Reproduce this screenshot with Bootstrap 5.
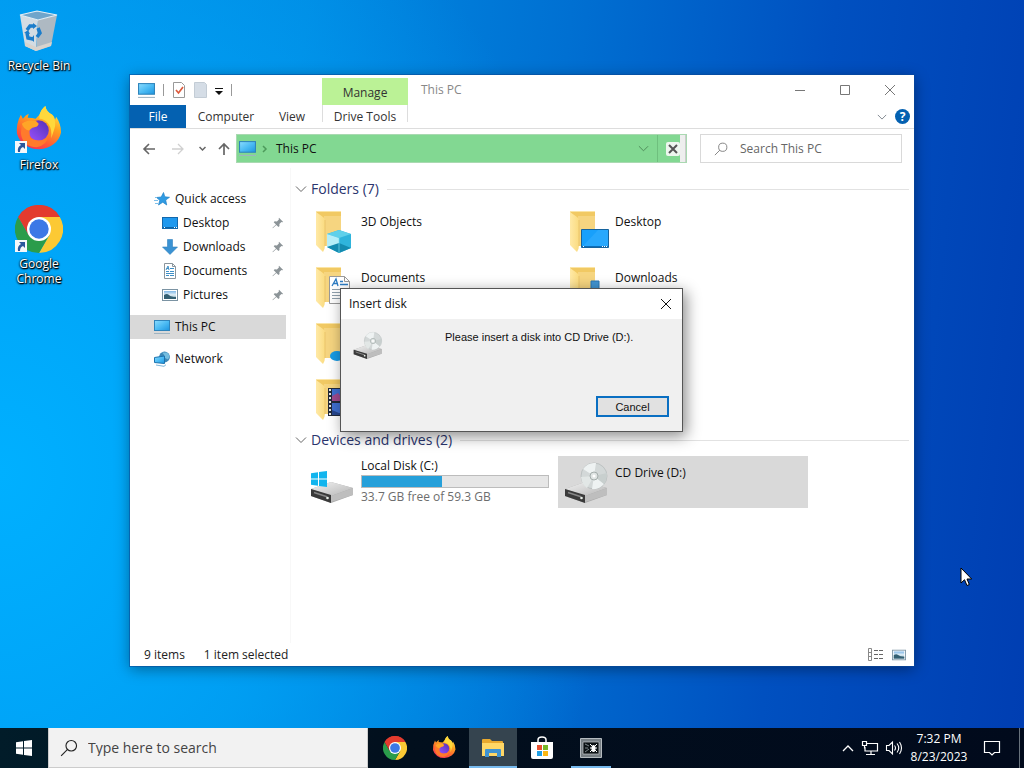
<!DOCTYPE html>
<html lang="en">

<head>
  <meta charset="utf-8">
  <meta name="viewport" content="width=device-width, initial-scale=1">
  <title>This PC</title>
  <link href="https://cdn.jsdelivr.net/npm/bootstrap@5.3.2/dist/css/bootstrap.min.css" rel="stylesheet">
  <script src="https://cdn.jsdelivr.net/npm/bootstrap@5.3.2/dist/js/bootstrap.bundle.min.js"></script>
  <style>
    body {
      font-family: "Open Sans", "Noto Sans", sans-serif;
      font-size: 12px;
      line-height: 16px;
      color: #111;
    }

    svg {
      display: block;
      flex: none;
    }

    button {
      border: 0;
      padding: 0;
      background: none;
      color: inherit;
    }

    a {
      color: inherit;
      text-decoration: none;
    }

    .desktop {
      background:
        radial-gradient(ellipse 620px 700px at 0 65%, #00b0ff 0, #00aafccc 35%, #00a0f800 100%),
        linear-gradient(96deg, #0094ea 0, #008ae2 28%, #0070d2 52%, #0050c0 76%, #003eb2 100%);
    }

    /* desktop shortcuts */
    .shortcuts {
      width: 78px;
      padding-top: 7px;
      gap: 17px;
    }

    .shortcut {
      color: #fff;
      line-height: 15px;
      min-height: 82px;
      text-align: center;
      text-shadow: 1px 1px 1px #000, 0 1px 2px #000, 0 0 2px #000;
    }

    .shortcut svg {
      margin: 0 auto 2px;
    }

    /* explorer window */
    .explorer {
      top: 75px;
      right: 110px;
      bottom: 62px;
      left: 130px;
      box-shadow: 0 0 0 1px #0a4a9a88, 0 3px 14px #0006;
    }

    .titlebar {
      height: 30px;
      padding-right: 2px;
    }

    .quick-tools {
      width: 192px;
      padding-left: 8px;
    }

    .sep {
      width: 1px;
      height: 12px;
      background: #999;
    }

    .manage-tab {
      width: 86px;
      margin-top: 3px;
      padding-top: 2px;
      background: #bbf296;
      color: #333;
    }

    .window-name {
      margin-left: 13px;
      color: #888;
    }

    .caption-btn {
      width: 45px;
      color: #777;
    }

    .ribbon {
      height: 24px;
      border-bottom: 1px solid #ddd;
      color: #333;
    }

    .ribbon a {
      display: flex;
      align-items: center;
      justify-content: center;
      padding-top: 1px;
    }

    .tab-file {
      width: 56px;
      background: #0461b1;
      color: #fff;
    }

    .tab-computer {
      width: 80px;
    }

    .tab-view {
      width: 52px;
      margin-right: 4px;
    }

    .ribbon .tab-drive {
      width: 86px;
      border: solid #ddd;
      border-width: 0 1px;
      margin-bottom: 6px;
      padding-top: 7px;
    }

    .help-btn {
      width: 15px;
      height: 15px;
      background: #0461b1;
    }

    .address-row {
      height: 39px;
      padding: 5px 12px 5px 10px;
    }

    .history {
      width: 96px;
      padding-left: 1px;
      gap: 14px;
    }

    .history-up {
      margin-left: -2px;
    }

    .address {
      height: 29px;
      margin-right: 13px;
      padding-left: 2px;
      background: #82d892;
      border: 1px solid #a9d9b1;
    }

    .address-end {
      width: 6px;
      background: #eee;
      border-right: 1px solid #ccc;
    }

    .address-drop {
      color: #4b8756;
    }

    .stop-btn {
      width: 23px;
      border-left: 1px solid #6fbf7e;
      padding-left: 8px;
    }

    .find {
      width: 202px;
      height: 29px;
      border: 1px solid #d9d9d9;
      padding-left: 13px;
      gap: 12px;
      color: #777;
    }

    .find input,
    .task-search input {
      border: 0;
      outline: 0;
      background: none;
      min-width: 0;
      padding: 0;
    }

    .find input::placeholder {
      color: #666;
      opacity: 1;
    }

    .tree {
      width: 156px;
      padding-top: 19px;
      margin-right: 4px;
      flex: none;
    }

    .tree a {
      display: flex;
      align-items: center;
      height: 24px;
      gap: 5px;
      padding: 0 2px 0 24px;
    }

    .tree a.sub {
      padding-left: 32px;
    }

    .tree a.picked,
    .tile.picked {
      background: #d9d9d9;
    }

    .files {
      border-left: 1px solid #f8f8f8;
      padding: 7px 5px 0 4px;
    }

    .group-head {
      height: 30px;
      padding-bottom: 2px;
      gap: 4px;
      font-size: 14px;
      line-height: 20px;
      color: #2b356e;
      font-weight: 400;
    }

    .group-head::after {
      content: "";
      flex: 1;
      height: 1px;
      background: #e2e2e2;
      margin-left: 4px;
    }

    .group-head svg {
      color: #666;
    }

    .tiles {
      gap: 4px;
      padding-left: 9px;
      margin-bottom: 1px;
    }

    .tile {
      width: 250px;
      height: 52px;
      padding: 2px 5px 2px 3px;
      gap: 6px;
    }

    .tile-text {
      padding-top: 7px;
    }

    .tile-text.full {
      padding-top: 0;
    }

    .progress.usage {
      height: 13px;
      border: 1px solid #bcbcbc;
      background: #e6e6e6;
      margin: 1px 0;
    }

    .usage .progress-bar {
      background: #26a0da;
    }

    .free {
      color: #6d6d6d;
    }

    .status {
      height: 23px;
      padding: 0 8px 0 14px;
      color: #222;
    }

    .item-count {
      margin-right: 19px;
    }

    /* insert disk dialog */
    .disk-dialog {
      top: 288px;
      left: 340px;
      width: 343px;
      background: #f0f0f0;
      border: 1px solid #555;
      box-shadow: 3px 4px 14px #0007;
    }

    .dialog-title {
      height: 30px;
      padding-left: 8px;
      background: #fff;
    }

    .dialog-title button {
      width: 32px;
      height: 30px;
    }

    .dialog-main {
      min-height: 77px;
      padding: 10px 10px 0;
      gap: 62px;
      font-family: "Liberation Sans", sans-serif;
      font-size: 11px;
    }

    .cancel-btn {
      width: 73px;
      height: 21px;
      margin: 0 13px 14px;
      border: 2px solid #0a6fc2;
      background: #e1e1e1;
      font-family: "Liberation Sans", sans-serif;
      font-size: 11px;
      line-height: 16px;
    }

    /* taskbar */
    .taskbar {
      height: 40px;
      background: linear-gradient(90deg, #011c29, #020f1d 40%, #010a1c);
      color: #fff;
    }

    .start {
      width: 48px;
    }

    .task-search {
      width: 320px;
      background: #f2f2f2;
      border: 1px solid #ccc;
      border-top: 0;
      padding-left: 11px;
      gap: 10px;
      margin-right: 3px;
      font-size: 14px;
      color: #222;
    }

    .task-search input::placeholder {
      color: #444;
      opacity: 1;
    }

    .task-btn {
      width: 48px;
      margin-right: 1px;
      display: flex;
      align-items: center;
      justify-content: center;
    }

    .task-btn.current {
      background: #35444f;
      border-bottom: 2px solid #76b9ed;
      padding-top: 2px;
    }

    .task-btn.opened {
      width: 40px;
      margin-left: 4px;
      border-bottom: 2px solid #76b9ed;
      padding-top: 2px;
    }

    .tray {
      gap: 6px;
    }

    .clock {
      width: 60px;
      line-height: 18px;
      text-align: center;
    }

    .peek {
      width: 5px;
      border-left: 1px solid #68727c;
    }

    .pointer {
      left: 960px;
      top: 567px;
    }
  </style>
</head>

<body class="vh-100 overflow-hidden d-flex flex-column">

  <!-- shared icons -->
  <svg width="0" height="0" class="position-absolute" aria-hidden="true">
    <defs>
      <linearGradient id="screen" x1="0" y1="0" x2="1" y2="1">
        <stop offset="0" stop-color="#8bdcff" />
        <stop offset=".5" stop-color="#4dbcf4" />
        <stop offset="1" stop-color="#1c95e0" />
      </linearGradient>
      <linearGradient id="gold" x1="0" y1="0" x2="1" y2="0">
        <stop offset="0" stop-color="#ffe9a6" />
        <stop offset="1" stop-color="#fadb80" />
      </linearGradient>
      <linearGradient id="fox" x1=".8" y1="0" x2=".3" y2="1">
        <stop offset="0" stop-color="#fff14f" />
        <stop offset=".4" stop-color="#ffa21f" />
        <stop offset=".75" stop-color="#ff5a35" />
        <stop offset="1" stop-color="#f32e5c" />
      </linearGradient>
      <linearGradient id="globe" x1="0" y1="1" x2="1" y2="0">
        <stop offset="0" stop-color="#9a52ff" />
        <stop offset="1" stop-color="#5330b5" />
      </linearGradient>
      <linearGradient id="metal" x1="0" y1="0" x2="1" y2="1">
        <stop offset="0" stop-color="#f2f2f2" />
        <stop offset="1" stop-color="#b5b5b5" />
      </linearGradient>
      <linearGradient id="photo" x1="0" y1="0" x2="0" y2="1">
        <stop offset="0" stop-color="#7eb6e6" />
        <stop offset=".5" stop-color="#e5f1f7" />
        <stop offset="1" stop-color="#4d7f96" />
      </linearGradient>
    </defs>

    <symbol id="i-pc" viewBox="0 0 16 16">
      <rect x=".5" y="1.500" width="15" height="10" fill="url(#screen)" stroke="#2f84bb" />
      <path d="M0 14.500h16" stroke="#9fb4c2" />
    </symbol>
    <symbol id="i-desk" viewBox="0 0 16 16">
      <rect x=".5" y="2.500" width="15" height="11" fill="#1e98ee" stroke="#1268ac" />
      <path d="M1 12.500h14" stroke="#0b63a5" />
      <path d="M2 12.500h1m9 0h1m1 0h1" stroke="#fff" />
    </symbol>
    <symbol id="i-down" viewBox="0 0 16 16">
      <path d="M5.500.5h5v7.500h5L8 15.500.5 8h5z" fill="#3a92d3" stroke="#2f7fbd" stroke-width=".6" />
    </symbol>
    <symbol id="i-doc" viewBox="0 0 16 16">
      <path d="M2.500.5h8l3 3v12h-11z" fill="#fff" stroke="#8a959c" />
      <path d="M10.500.5v3h3" fill="none" stroke="#8a959c" />
      <path d="M4 7l2-4 1 4M4.500 5.500h2.500M8 5.500h4M4 8.500h3m1 0h4M4 10.500h8M4 12.500h3m1 0h4" fill="none" stroke="#3e8fc6" />
    </symbol>
    <symbol id="i-pic" viewBox="0 0 16 16">
      <rect x=".5" y="2.500" width="15" height="11" fill="#fff" stroke="#7b93a3" />
      <rect x="2" y="4" width="12" height="8" fill="url(#photo)" />
      <path d="M2 8q3-2 5 0t7 2v2H2z" fill="#335f72" />
    </symbol>
    <symbol id="i-star" viewBox="0 0 16 16">
      <path d="M9.500 1.500l1.300 4.300 4.700.5-3.800 2.700 1 5-3.900-2.800L4.500 14l1.300-4.700L2.500 6.500l4.700-.5z" fill="#2f9be3" stroke="#2383c7" stroke-width=".7" />
      <path d="M0 9.500h4M1 12.500h3M1 6.500h2" stroke="#7fc0ea" />
    </symbol>
    <symbol id="i-net" viewBox="0 0 16 16">
      <circle cx="10.500" cy="6" r="5.400" fill="#3c87b6" />
      <path d="M8 1.500q3 2 2 5l4 2q3-4-1-7z" fill="#74bddf" />
      <path d="M.5 6.500L10.500 5v7.500l-10-1z" fill="url(#screen)" stroke="#1b72ae" />
      <path d="M2 14l8 1.300 2-1.600" fill="none" stroke="#7fb6d8" />
    </symbol>
    <symbol id="i-pin" viewBox="0 0 12 12">
      <path d="M7 .8L11.200 5l-1 .3-.8-.2-2 2 .1 2-1 1L4.300 7.900.8 11.300l-.3-.5L4 7.500 1.700 5.300l1-1 2.200.2 2-2-.2-.9z" fill="#8c9498" />
    </symbol>
    <symbol id="i-chev" viewBox="0 0 12 12">
      <path d="M1 3.500l5 5 5-5" fill="none" stroke="currentColor" />
    </symbol>
    <symbol id="i-close" viewBox="0 0 12 12">
      <path d="M1 1l10 10M11 1L1 11" fill="none" stroke="currentColor" />
    </symbol>
    <symbol id="i-lens" viewBox="0 0 16 16">
      <circle cx="10" cy="6" r="4.700" fill="none" stroke="currentColor" />
      <path d="M6.700 9.300L1 15" stroke="currentColor" />
    </symbol>
    <symbol id="i-folder" viewBox="0 0 48 48">
      <path d="M9 4h25v35H15z" fill="#f1c963" />
      <path d="M17 9h17v29l-14 1q-3 0-3-2z" fill="#f6d580" />
      <path d="M9 5l7 5q2 1 2 4v24q0 4-2 7l-7-7z" fill="url(#gold)" />
      <path d="M9 4.500h25" stroke="#fbe5a5" />
      <path d="M18 13v26" stroke="#e2b95a" stroke-width=".6" />
    </symbol>
    <symbol id="i-drive" viewBox="0 0 48 26">
      <path d="M4 12L24 5l22 6v7L24 26 4 19z" fill="#aaa" />
      <path d="M4 12L24 5l22 6-22 8z" fill="url(#metal)" />
      <path d="M24 19l22-8v7l-22 7z" fill="#bebebe" />
      <path d="M4 12l20 6v8L4 19z" fill="#3a3a3a" />
      <path d="M7 15.500l13 4.200" stroke="#868686" stroke-width="1.500" />
      <circle cx="20.500" cy="21" r="1.300" fill="#e9efe9" />
    </symbol>
    <symbol id="i-cd" viewBox="0 0 48 48">
      <use href="#i-drive" y="19" width="48" height="26" />
      <circle cx="33" cy="18" r="13" fill="#d3d8d8" stroke="#b1b7b7" stroke-width=".7" />
      <path d="M33 18L22 11q5-7 13-6zM33 18l10 8q-5 6-12 5z" fill="#eef2f2" />
      <path d="M33 18l13-3q0 7-3 11z" fill="#c8cfce" />
      <path d="M33 18l-13 1q1 8 6 11z" fill="#e2e7e6" />
      <circle cx="33" cy="18" r="4" fill="#dfe4e3" stroke="#a5adac" />
      <circle cx="33" cy="18" r="1.500" fill="#fff" />
    </symbol>
    <symbol id="i-chrome" viewBox="0 0 48 48">
      <path d="M24 24L3.200 12A24 24 0 0 1 44.800 12z" fill="#e33b2e" />
      <path d="M24 12h20.800A24 24 0 0 1 24 48l10.400-18z" fill="#fcc934" />
      <path d="M13.600 30L3.200 12A24 24 0 0 0 24 48l10.400-18z" fill="#2b9c4b" />
      <path d="M3.200 12A24 24 0 0 1 44.800 12H24L13.600 30z" fill="#e33b2e" />
      <circle cx="24" cy="24" r="12" fill="#fff" />
      <circle cx="24" cy="24" r="9.700" fill="#3c78e6" />
    </symbol>
    <symbol id="i-firefox" viewBox="0 0 48 48">
      <path d="M25 9Q27 3 31 0q1 6 7 9 2 1 3 5l1-3q5 7 5 16a23 21 0 0 1-45 1Q1 18 6 9l2 4q3-4 6-5l-1 4q5 0 8 1z" fill="url(#fox)" />
      <circle cx="24" cy="25" r="10.500" fill="url(#globe)" />
      <path d="M7 18q6-5 14-3l3 3q0 3-6 4-4 2-3 6-1 6 7 7 8 1 12-5-1 10-12 12Q8 42 6 28z" fill="#ff7a2c" />
      <path d="M25 9Q27 3 31 0q1 6 7 9 5 7 2 15l-3 9q1-10-3-15-4-5-9-5z" fill="#ffd83b" />
      <path d="M7 18q6-5 14-3l3 3q0 3-6 4l-4 3q-5-1-7-7z" fill="#ffa527" />
    </symbol>
    <symbol id="i-link" viewBox="0 0 12 12">
      <path d="M0 0h12v12H0z" fill="#f5f7fa" />
      <path d="M4 2h6v6L8 6q-3 1-3 5H3q-1-5 3-7z" fill="#2a579c" />
    </symbol>
    <symbol id="i-win" viewBox="0 0 16 16">
      <path d="M0 2.300l7-1v6.200H0zM8 1.100L16 0v7.500H8zM0 8.500h7v6.200l-7-1zM8 8.500h8V16l-8-1.100z" fill="currentColor" />
    </symbol>
  </svg>

  <main class="desktop position-relative flex-grow-1">

    <nav class="shortcuts d-flex flex-column" aria-label="Desktop shortcuts">
      <a href="#" class="shortcut">
        <svg width="48" height="49" viewBox="0 0 48 49">
          <path d="M5 8l18 5-2 31-11-5z" fill="#d3dce3" />
          <path d="M23 13l19-5-6 31-15 5z" fill="#aeb9c2" />
          <path d="M5 8l17-4 20 4-19 5z" fill="#6fa5cb" stroke="#e6eff5" stroke-width="1.200" />
          <path d="M10 35l11 5 16-5-1 4-15 5-11-5z" fill="#d8d3cd" />
          <g fill="none" stroke="#1b7dcb" stroke-width="3.500">
            <path d="M12 23l3-4h4M23 21l2 5-3 4M18 32l-5-1-1-5" />
          </g>
          <path d="M18 16l4 3-4 3zM19 28v7l-3-3zM9 26l4-3 2 4z" fill="#1b7dcb" />
        </svg>
        Recycle Bin
      </a>
      <a href="#" class="shortcut">
        <svg width="48" height="49" viewBox="0 0 48 49">
          <use href="#i-firefox" width="47" height="47" />
          <use href="#i-link" y="35" width="12" height="12" />
        </svg>
        Firefox
      </a>
      <a href="#" class="shortcut">
        <svg width="48" height="49" viewBox="0 0 48 49">
          <use href="#i-chrome" width="48" height="48" />
          <use href="#i-link" y="35" width="12" height="12" />
        </svg>
        Google<br>Chrome
      </a>
    </nav>

    <section class="explorer position-absolute bg-white d-flex flex-column" aria-label="This PC">
      <header class="titlebar d-flex">
        <div class="quick-tools d-flex align-items-center">
          <svg width="17" height="17" class="me-2"><use href="#i-pc" /></svg>
          <span class="sep me-2"></span>
          <button type="button" class="me-2" aria-label="Properties">
            <svg width="14" height="16" viewBox="1 0 14 16">
              <path d="M2.500.5h8l3 3v12h-11z" fill="#fff" stroke="#999" />
              <path d="M5 8l2.500 3L12 5" fill="none" stroke="#dc5a3c" stroke-width="1.700" />
            </svg>
          </button>
          <button type="button" class="me-2" aria-label="New folder">
            <svg width="13" height="16" viewBox="0 0 13 16">
              <path d="M.5.500h10l2 2v13H.5z" fill="#d5dde6" stroke="#c3ccd5" />
            </svg>
          </button>
          <button type="button" class="me-2" aria-label="Customize toolbar">
            <svg width="8" height="9" viewBox="0 0 8 9">
              <path d="M0 2h8v1H0zM0 5h8L4 9z" fill="#111" />
            </svg>
          </button>
          <span class="sep"></span>
        </div>
        <div class="manage-tab d-flex align-items-center justify-content-center">Manage</div>
        <div class="window-name align-self-center">This PC</div>
        <div class="ms-auto d-flex">
          <button type="button" class="caption-btn" aria-label="Minimize">
            <svg class="mx-auto" width="12" height="12" viewBox="0 0 12 12"><path d="M1 6.500h10" stroke="currentColor" /></svg>
          </button>
          <button type="button" class="caption-btn" aria-label="Maximize">
            <svg class="mx-auto" width="12" height="12" viewBox="0 0 12 12"><path d="M1.500 1.500h9v9h-9z" fill="none" stroke="currentColor" /></svg>
          </button>
          <button type="button" class="caption-btn" aria-label="Close">
            <svg class="mx-auto" width="12" height="12"><use href="#i-close" /></svg>
          </button>
        </div>
      </header>

      <nav class="ribbon d-flex" aria-label="Ribbon">
        <a href="#" class="tab-file">File</a>
        <a href="#" class="tab-computer">Computer</a>
        <a href="#" class="tab-view">View</a>
        <a href="#" class="tab-drive">Drive Tools</a>
        <div class="ms-auto d-flex align-items-center pe-1 gap-2">
          <button type="button" aria-label="Expand ribbon">
            <svg width="10" height="10" class="text-secondary"><use href="#i-chev" /></svg>
          </button>
          <button type="button" aria-label="Help" class="help-btn d-flex align-items-center justify-content-center rounded-circle text-white fw-bold">?</button>
        </div>
      </nav>

      <div class="address-row d-flex align-items-center">
        <div class="history d-flex align-items-center">
          <button type="button" aria-label="Back">
            <svg width="16" height="14" viewBox="0 0 16 14"><path d="M14 7H3M8 2L3 7l5 5" fill="none" stroke="#666" stroke-width="1.600" /></svg>
          </button>
          <button type="button" aria-label="Forward">
            <svg width="14" height="14" viewBox="0 0 14 14"><path d="M1 7h11M7 2l5 5-5 5" fill="none" stroke="#d0d0d0" stroke-width="1.300" /></svg>
          </button>
          <button type="button" aria-label="Recent locations">
            <svg width="7" height="7" viewBox="0 0 7 7"><path d="M.5 2l3 3 3-3" fill="none" stroke="#666" stroke-width="1.500" /></svg>
          </button>
          <button type="button" class="history-up" aria-label="Up">
            <svg width="12" height="14" viewBox="2 0 12 14"><path d="M8 13V2M3 7l5-5 5 5" fill="none" stroke="#666" stroke-width="1.700" /></svg>
          </button>
        </div>
        <div class="address d-flex flex-grow-1">
          <div class="d-flex align-items-center flex-grow-1">
            <svg width="17" height="17" class="me-1"><use href="#i-pc" /></svg>
            <svg width="8" height="8" viewBox="0 0 8 8" class="me-2"><path d="M3 1l3 3-3 3" fill="none" stroke="#4d9a5b" stroke-width="1.500" /></svg>
            <a href="#">This PC</a>
            <button type="button" class="address-drop ms-auto me-2" aria-label="Previous locations">
              <svg width="11" height="11"><use href="#i-chev" /></svg>
            </button>
          </div>
          <button type="button" class="stop-btn" aria-label="Stop">
            <svg width="14" height="14" viewBox="0 0 14 14">
              <rect width="14" height="14" rx="2" fill="#eef6ef" />
              <path d="M3 3l8 8M11 3l-8 8" stroke="#555" stroke-width="2" />
            </svg>
          </button>
          <span class="address-end"></span>
        </div>
        <label class="find d-flex align-items-center">
          <svg width="14" height="14"><use href="#i-lens" /></svg>
          <input type="search" placeholder="Search This PC" aria-label="Search This PC">
        </label>
      </div>

      <div class="d-flex flex-grow-1 overflow-hidden">
        <nav class="tree" aria-label="Navigation pane">
          <a href="#"><svg width="16" height="16"><use href="#i-star" /></svg>Quick access</a>
          <a href="#" class="sub"><svg width="16" height="16"><use href="#i-desk" /></svg>Desktop<svg class="ms-auto" width="12" height="12"><use href="#i-pin" /></svg></a>
          <a href="#" class="sub"><svg width="16" height="16"><use href="#i-down" /></svg>Downloads<svg class="ms-auto" width="12" height="12"><use href="#i-pin" /></svg></a>
          <a href="#" class="sub"><svg width="16" height="16"><use href="#i-doc" /></svg>Documents<svg class="ms-auto" width="12" height="12"><use href="#i-pin" /></svg></a>
          <a href="#" class="sub"><svg width="16" height="16"><use href="#i-pic" /></svg>Pictures<svg class="ms-auto" width="12" height="12"><use href="#i-pin" /></svg></a>
          <a href="#" class="picked mt-2"><svg width="16" height="16"><use href="#i-pc" /></svg>This PC</a>
          <a href="#" class="mt-2"><svg width="16" height="16"><use href="#i-net" /></svg>Network</a>
        </nav>

        <div class="files flex-grow-1">
          <h2 class="group-head d-flex align-items-center m-0"><svg width="12" height="12"><use href="#i-chev" /></svg>Folders (7)</h2>
          <div class="tiles d-flex flex-wrap">
            <a href="#" class="tile d-flex">
              <svg width="48" height="48" viewBox="0 0 48 48">
                <use href="#i-folder" />
                <path d="M20 27l12-4 12 4v14l-12 5-12-6z" fill="#2fb4dc" />
                <path d="M20 27l12-4 12 4-12 4z" fill="#5fd0ea" />
                <path d="M20 27l12 4v8l-12 1z" fill="#b5eef8" />
                <path d="M20 40l12-4 12 5-12 5z" fill="#148bb0" />
                <path d="M32 31v15" stroke="#7fdcf0" stroke-width=".7" />
              </svg>
              <div class="tile-text">3D Objects</div>
            </a>
            <a href="#" class="tile d-flex">
              <svg width="48" height="48" viewBox="0 0 48 48">
                <use href="#i-folder" />
                <path d="M20.500 22.500h27v18h-27z" fill="#18a0fb" stroke="#15639e" />
                <path d="M21 40l16-17h10v17z" fill="#38b0ff" opacity=".5" />
                <path d="M21 39.500h26" stroke="#0c6db8" />
                <path d="M22 39.500h2m17 0h5" stroke="#fff" stroke-dasharray="1" />
              </svg>
              <div class="tile-text">Desktop</div>
            </a>
            <a href="#" class="tile d-flex">
              <svg width="48" height="48" viewBox="0 0 48 48">
                <use href="#i-folder" />
                <path d="M22.500 13.500h15l5 5v22h-20z" fill="#fff" stroke="#999" />
                <path d="M37.500 13.500v5h5" fill="none" stroke="#999" />
                <path d="M25 23l4-7 2 7M26 20.500h5M33 18.500h3M33 21.500h8" fill="none" stroke="#2d7cc2" stroke-width="1.300" />
                <path d="M25 26.500h15M25 29.500h15M25 32.500h15M25 35.500h15" stroke="#8fa0ad" />
              </svg>
              <div class="tile-text">Documents</div>
            </a>
            <a href="#" class="tile d-flex">
              <svg width="48" height="48" viewBox="0 0 48 48">
                <use href="#i-folder" />
                <path d="M30 18h8v12h6L34 42 24 30h6z" fill="#4295d2" stroke="#2b76b2" />
              </svg>
              <div class="tile-text">Downloads</div>
            </a>
            <a href="#" class="tile d-flex" aria-label="Music">
              <svg width="48" height="48" viewBox="0 0 48 48">
                <use href="#i-folder" />
                <ellipse cx="30" cy="37" rx="7" ry="5" fill="#169be5" />
                <path d="M36 37V18l8 5" fill="none" stroke="#169be5" stroke-width="2" />
              </svg>
            </a>
            <a href="#" class="tile d-flex" aria-label="Pictures">
              <svg width="48" height="48" viewBox="0 0 48 48">
                <use href="#i-folder" />
                <use href="#i-pic" x="19" y="19" width="28" height="24" />
              </svg>
            </a>
            <a href="#" class="tile d-flex" aria-label="Videos">
              <svg width="48" height="48" viewBox="0 0 48 48">
                <use href="#i-folder" />
                <path d="M21 13h24v28H21z" fill="#222a3a" />
                <path d="M25 14h16v12H25zM25 28h16v12H25z" fill="#3f6fd0" />
                <path d="M25 21l6-3 4 5 6-2v5H25z" fill="#a04a8e" />
                <path d="M25 35l7 3h9v2H25z" fill="#27468e" />
                <path d="M23 14v26" stroke="#e6e6e6" stroke-width="2" stroke-dasharray="2" />
              </svg>
            </a>
          </div>

          <h2 class="group-head d-flex align-items-center m-0"><svg width="12" height="12"><use href="#i-chev" /></svg>Devices and drives (2)</h2>
          <div class="tiles d-flex flex-wrap">
            <a href="#" class="tile d-flex">
              <svg width="48" height="48" viewBox="0 0 48 48">
                <use href="#i-drive" y="19" width="48" height="26" />
                <use href="#i-win" x="4" y="13" width="16" height="16" color="#12b5ee" />
              </svg>
              <div class="tile-text full flex-grow-1">
                <div>Local Disk (C:)</div>
                <div class="progress usage rounded-0" role="progressbar" aria-label="Space used" aria-valuenow="43" aria-valuemin="0" aria-valuemax="100">
                  <div class="progress-bar" style="width: 43%"></div>
                </div>
                <div class="free">33.7 GB free of 59.3 GB</div>
              </div>
            </a>
            <a href="#" class="tile picked d-flex">
              <svg width="48" height="48"><use href="#i-cd" /></svg>
              <div class="tile-text">CD Drive (D:)</div>
            </a>
          </div>
        </div>
      </div>

      <footer class="status d-flex align-items-center">
        <span class="item-count">9 items</span>
        <span>1 item selected</span>
        <button type="button" class="ms-auto me-2" aria-label="Details view">
          <svg width="16" height="14" viewBox="0 0 16 14">
            <path d="M.5.500h3v12h-3zM.5 4.500h3M.5 8.500h3" fill="none" stroke="#888" />
            <path d="M6 2.500h4m1 0h4M6 6.500h4m1 0h4M6 10.500h4m1 0h4" stroke="#666" />
          </svg>
        </button>
        <button type="button" aria-label="Large icons view">
          <svg width="14" height="14"><use href="#i-pic" /></svg>
        </button>
      </footer>
    </section>

    <section class="disk-dialog position-absolute d-flex flex-column" role="dialog" aria-labelledby="diskTitle">
      <div class="dialog-title d-flex align-items-center justify-content-between">
        <span id="diskTitle">Insert disk</span>
        <button type="button" aria-label="Close">
          <svg class="mx-auto" width="12" height="12"><use href="#i-close" /></svg>
        </button>
      </div>
      <div class="dialog-main d-flex">
        <svg width="32" height="32"><use href="#i-cd" /></svg>
        <div>Please insert a disk into CD Drive (D:).</div>
      </div>
      <button type="button" class="cancel-btn align-self-end">Cancel</button>
    </section>

    <svg class="pointer position-absolute" width="13" height="20" viewBox="0 0 13 20">
      <path d="M1 1v15l3.500-3.300L7 18.500l2.300-1L7 12h4.700z" fill="#fff" stroke="#000" />
    </svg>
  </main>

  <footer class="taskbar d-flex">
    <button type="button" class="start" aria-label="Start">
      <svg class="mx-auto" width="16" height="16"><use href="#i-win" /></svg>
    </button>
    <label class="task-search d-flex align-items-center">
      <svg width="18" height="18"><use href="#i-lens" /></svg>
      <input type="search" class="flex-grow-1" placeholder="Type here to search" aria-label="Type here to search">
    </label>
    <button type="button" class="task-btn" aria-label="Google Chrome"><svg width="24" height="24"><use href="#i-chrome" /></svg></button>
    <button type="button" class="task-btn" aria-label="Firefox"><svg width="24" height="24"><use href="#i-firefox" /></svg></button>
    <button type="button" class="task-btn current" aria-label="File Explorer">
      <svg width="24" height="24" viewBox="0 0 24 24">
        <path d="M1 4q0-1 1-1h7l2 2h10q1 0 1 1v14H1z" fill="#e9a92e" />
        <path d="M1 7h22v13H1z" fill="#ffd766" />
        <path d="M4 21v-7q0-1 1-1h14q1 0 1 1v7h-4v-4H8v4z" fill="#3f93d2" />
      </svg>
    </button>
    <button type="button" class="task-btn" aria-label="Microsoft Store">
      <svg width="24" height="24" viewBox="0 0 24 24">
        <path d="M8 7V4q0-3 4-3t4 3v3" fill="none" stroke="#fff" stroke-width="1.500" />
        <path d="M1 6h22v15q0 2-2 2H3q-2 0-2-2z" fill="#fff" />
        <path d="M7 9h5v5H7z" fill="#e8502f" />
        <path d="M13 9h5v5h-5z" fill="#78b82a" />
        <path d="M7 15h5v5H7z" fill="#1f9fe5" />
        <path d="M13 15h5v5h-5z" fill="#fbb714" />
      </svg>
    </button>
    <button type="button" class="task-btn opened" aria-label="Debugger">
      <svg width="22" height="20" viewBox="0 0 22 20">
        <path d="M.5.500h21v19H.5z" fill="#777f84" stroke="#b5bbbf" />
        <path d="M3 4h16v12H3z" fill="#0b1114" stroke="#c5c9cb" stroke-width=".7" />
        <path d="M5 6l4 2M5 10h3M5 14l4-3" stroke="#7e878b" />
        <ellipse cx="13.500" cy="10.500" rx="2" ry="3.500" fill="#fff" />
        <path d="M10 6l2 2m5-2l-2 2m-5 2h7m-7 4l2-2m5 2l-2-2" stroke="#fff" />
      </svg>
    </button>

    <div class="tray d-flex align-items-center ms-auto">
      <button type="button" aria-label="Show hidden icons">
        <svg width="14" height="14" viewBox="0 0 14 14"><path d="M2 10l5-5 5 5" fill="none" stroke="#fff" stroke-width="1.300" /></svg>
      </button>
      <button type="button" aria-label="Network">
        <svg width="18" height="16" viewBox="0 0 18 16">
          <path d="M6 3.500h10.500v7.500H4V7M10 11v3.500M5 14.500h9M1.500 1.500h4v4h-4zM3.500 5.500v3" fill="none" stroke="#fff" stroke-width="1.200" />
        </svg>
      </button>
      <button type="button" aria-label="Volume">
        <svg width="18" height="16" viewBox="0 0 18 16">
          <path d="M1.500 5.500h2.500L7.500 2v12L4 10.500H1.500zM9.500 5.500q2 2.500 0 5M12 3.500q3.500 4.500 0 9M14.500 2q4 6 0 12" fill="none" stroke="#fff" stroke-width="1.100" />
        </svg>
      </button>
      <div class="clock">7:32 PM<br>8/23/2023</div>
      <button type="button" aria-label="Notifications" class="mx-2">
        <svg width="18" height="18" viewBox="0 0 18 18"><path d="M1.500 2.500h15v11h-5L9 16l-2.500-2.500h-5z" fill="none" stroke="#fff" stroke-width="1.200" /></svg>
      </button>
      <button type="button" class="peek align-self-stretch ms-1" aria-label="Show desktop"></button>
    </div>
  </footer>

</body>

</html>
